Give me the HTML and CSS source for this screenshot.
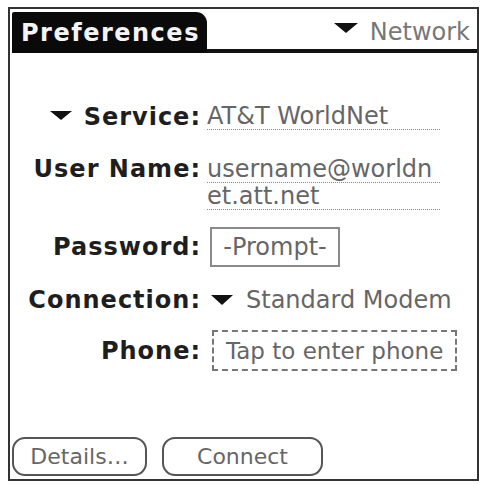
FILE: index.html
```html
<!DOCTYPE html>
<html>
<head>
<meta charset="utf-8">
<link rel="stylesheet" href="styles.css">
</head>
<body>
<div class="screen">
  <div class="titlebar">
    <div class="tab">Preferences</div>
    <div class="bar">
      <svg class="tri" width="24" height="10" viewBox="0 0 24 10"><polygon points="0,0 24,0 12,10" fill="#111"/></svg>
      <span class="bar-text">Network</span>
    </div>
  </div>

  <div class="form">
    <div class="row row-service">
      <div class="label"><svg class="tri tri-label" width="22" height="9" viewBox="0 0 22 9"><polygon points="0,0 22,0 11,9" fill="#111"/></svg>Service:</div>
      <div class="field"><div class="line">AT&amp;T WorldNet</div></div>
    </div>

    <div class="row row-user">
      <div class="label label-top">User Name:</div>
      <div class="field">
        <div class="line">username@worldn</div>
        <div class="line">et.att.net</div>
      </div>
    </div>

    <div class="row row-pass">
      <div class="label">Password:</div>
      <div class="box box-pass">-Prompt-</div>
    </div>

    <div class="row row-conn">
      <div class="label">Connection:</div>
      <div class="picker"><svg class="tri" width="22" height="10" viewBox="0 0 22 10"><polygon points="0,0 22,0 11,10" fill="#111"/></svg><span>Standard Modem</span></div>
    </div>

    <div class="row row-phone">
      <div class="label">Phone:</div>
      <div class="box box-phone"><span>Tap to enter phone</span></div>
    </div>
  </div>

  <div class="buttons">
    <div class="btn btn-details">Details…</div>
    <div class="btn btn-connect">Connect</div>
  </div>
</div>
</body>
</html>
```

FILE: styles.css
```css
html, body {
  margin: 0;
  padding: 0;
  background: #fff;
}

body {
  width: 484px;
  height: 484px;
  overflow: hidden;
  font-family: "DejaVu Sans", "Liberation Sans", sans-serif;
  font-size: 24px;
  line-height: 26px;
  color: #222;
}

.screen {
  box-sizing: border-box;
  width: 471px;
  height: 474px;
  margin: 7px 0 0 8px;
  border: 2px solid #333;
  display: flex;
  flex-direction: column;
}

.titlebar {
  display: flex;
  height: 41px;
  margin: 3px 0 0 2px;
}

.tab {
  width: 195px;
  box-sizing: border-box;
  background: #0a0a0a;
  color: #f4f4f4;
  font-weight: bold;
  letter-spacing: 1.5px;
  padding: 8px 0 0 9px;
  border-top-right-radius: 11px;
  border-top-left-radius: 2px;
}

.bar {
  flex: 1;
  border-bottom: 4px solid #111;
  display: flex;
  align-items: flex-start;
  justify-content: flex-end;
  padding: 7px 7px 0 0;
  color: #777;
}

.bar .tri {
  margin: 4px 12px 0 0;
}

.form {
  display: flex;
  flex-direction: column;
}

.row {
  display: grid;
  grid-template-columns: 190px auto;
  column-gap: 7px;
  align-items: center;
  justify-items: start;
}

.label {
  justify-self: end;
  font-weight: bold;
  letter-spacing: 1px;
  margin-right: -1px;
  color: #1e1e1e;
  white-space: nowrap;
}

.label-top {
  align-self: start;
}

.tri-label {
  margin: 0 12px 5px 0;
}

.field {
  width: 233px;
  color: #666;
  align-self: start;
}

.line {
  height: 26px;
  border-bottom: 1px dotted #8a8a8a;
  white-space: nowrap;
}

.row-service { margin-top: 50px; }
.row-user { margin-top: 26px; }
.row-pass { margin-top: 17px; }
.row-conn { margin-top: 20px; }
.row-phone { margin-top: 17px; }

.box {
  box-sizing: border-box;
  color: #666;
  display: flex;
  align-items: center;
  white-space: nowrap;
  overflow: hidden;
}

.box-pass {
  margin-left: 3px;
  width: 130px;
  height: 40px;
  border: 2px solid #8a8a8a;
  justify-content: center;
}

.box-phone {
  margin-left: 5px;
  width: 245px;
  height: 41px;
  border: 2px dashed #777;
  padding-left: 12px;
  font-size: 23px;
}

.picker {
  display: flex;
  align-items: center;
  margin-left: 4px;
  color: #666;
  white-space: nowrap;
}

.picker .tri {
  margin-right: 13px;
}

.buttons {
  margin: auto 0 3px 2px;
  display: flex;
  gap: 15px;
}

.btn {
  box-sizing: border-box;
  height: 39px;
  border: 2px solid #555;
  border-radius: 13px;
  display: flex;
  align-items: center;
  justify-content: center;
  color: #666;
  font-size: 22px;
}

.btn-details { width: 135px; }
.btn-connect { width: 161px; }
```
